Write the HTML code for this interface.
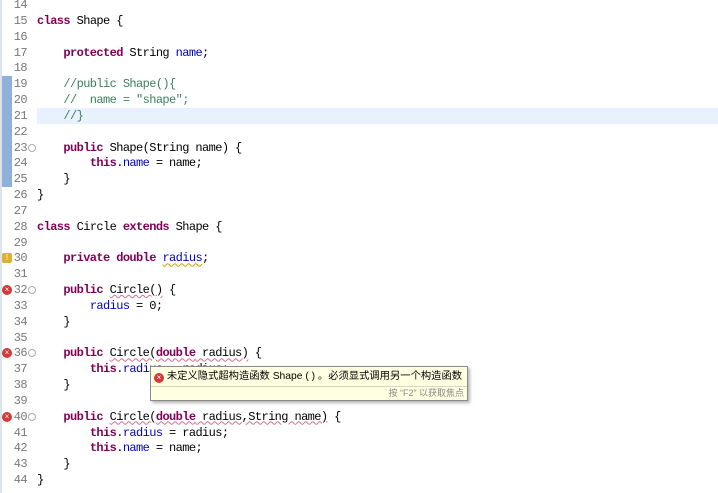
<!DOCTYPE html>
<html><head><meta charset="utf-8"><style>
body{margin:0;width:718px;height:493px;overflow:hidden;background:#fff;position:relative;font-family:"Liberation Mono",monospace;font-size:12px;letter-spacing:-0.6px}
.l{position:absolute;left:0;height:16px;line-height:16px;white-space:pre;width:718px}
.n{position:absolute;right:691px;color:#787878;text-align:right}
.c{position:absolute;left:37px;color:#000}
.k{color:#7f0055;font-weight:bold}
.f{color:#0000c0}
.cm{color:#3f7f5f}
.s{color:#2a00ff}
.sq{text-decoration:underline wavy #d07090;text-decoration-thickness:1px}
.err{position:absolute;left:2px;width:10px;height:10px;border-radius:50%;background:#d23a3a;top:3px;color:#fff;font-size:8px;line-height:10px;text-align:center;font-family:"Liberation Sans",sans-serif;letter-spacing:0}
.fold{position:absolute;left:28px;top:4px;width:6px;height:6px;border:1px solid #aaa;border-radius:50%;}
</style></head><body>
<div style="position:absolute;left:0;top:0;width:2px;height:493px;background:#dde3ea"></div>
<div style="position:absolute;left:2px;top:76px;width:10px;height:111px;background:#8fb0d8"></div>
<div style="position:absolute;left:37px;top:108px;width:681px;height:16px;background:#e8f2fe"></div>

<div class="l" style="top:-3px"><span class="n">14</span></div>
<div class="l" style="top:12.8px"><span class="n">15</span><span class="c"><span class="k">class</span> Shape {</span></div>
<div class="l" style="top:28.7px"><span class="n">16</span></div>
<div class="l" style="top:44.5px"><span class="n">17</span><span class="c">    <span class="k">protected</span> String <span class="f">name</span>;</span></div>
<div class="l" style="top:60.3px"><span class="n">18</span></div>
<div class="l" style="top:76.2px"><span class="n">19</span><span class="c"><span class="cm">    //public Shape(){</span></span></div>
<div class="l" style="top:92px"><span class="n">20</span><span class="c"><span class="cm">    //  name = "shape";</span></span></div>
<div class="l" style="top:107.8px"><span class="n">21</span><span class="c"><span class="cm">    //}</span></span></div>
<div class="l" style="top:123.6px"><span class="n">22</span></div>
<div class="l" style="top:139.5px"><span class="n">23</span><span class="fold"></span><span class="c">    <span class="k">public</span> Shape(String name) {</span></div>
<div class="l" style="top:155.3px"><span class="n">24</span><span class="c">        <span class="k">this</span>.<span class="f">name</span> = name;</span></div>
<div class="l" style="top:171.1px"><span class="n">25</span><span class="c">    }</span></div>
<div class="l" style="top:187px"><span class="n">26</span><span class="c">}</span></div>
<div class="l" style="top:202.8px"><span class="n">27</span></div>
<div class="l" style="top:218.6px"><span class="n">28</span><span class="c"><span class="k">class</span> Circle <span class="k">extends</span> Shape {</span></div>
<div class="l" style="top:234.5px"><span class="n">29</span></div>
<div class="l" style="top:250.3px"><span class="n">30</span><span class="err" style="background:#e0b030;border-radius:2px">!</span><span class="c">    <span class="k">private double</span> <span class="f sq" style="text-decoration-color:#d0a000">radius</span>;</span></div>
<div class="l" style="top:266.1px"><span class="n">31</span></div>
<div class="l" style="top:282px"><span class="n">32</span><span class="err">×</span><span class="fold"></span><span class="c">    <span class="k">public</span> <span class="sq">Circle()</span> {</span></div>
<div class="l" style="top:297.8px"><span class="n">33</span><span class="c">        <span class="f">radius</span> = 0;</span></div>
<div class="l" style="top:313.6px"><span class="n">34</span><span class="c">    }</span></div>
<div class="l" style="top:329.5px"><span class="n">35</span></div>
<div class="l" style="top:345.3px"><span class="n">36</span><span class="err">×</span><span class="fold"></span><span class="c">    <span class="k">public</span> <span class="sq">Circle(<span class="k">double</span> radius)</span> {</span></div>
<div class="l" style="top:361.1px"><span class="n">37</span><span class="c">        <span class="k">this</span>.<span class="f">radius</span> = radius;</span></div>
<div class="l" style="top:377px"><span class="n">38</span><span class="c">    }</span></div>
<div class="l" style="top:392.8px"><span class="n">39</span></div>
<div class="l" style="top:408.6px"><span class="n">40</span><span class="err">×</span><span class="fold"></span><span class="c">    <span class="k">public</span> <span class="sq">Circle(<span class="k">double</span> radius,String name)</span> {</span></div>
<div class="l" style="top:424.5px"><span class="n">41</span><span class="c">        <span class="k">this</span>.<span class="f">radius</span> = radius;</span></div>
<div class="l" style="top:440.3px"><span class="n">42</span><span class="c">        <span class="k">this</span>.<span class="f">name</span> = name;</span></div>
<div class="l" style="top:456.1px"><span class="n">43</span><span class="c">    }</span></div>
<div class="l" style="top:472px"><span class="n">44</span><span class="c">}</span></div>

<div style="position:absolute;left:150px;top:366px;width:316px;height:33px;background:#ffffe1;border:1px solid #8a8a8a;box-shadow:2px 2px 3px rgba(0,0,0,.3);font-family:'Liberation Sans','Noto Sans CJK SC',sans-serif;letter-spacing:0">
<div style="height:19px;line-height:19px;font-size:10.3px;white-space:nowrap;padding-left:3px;overflow:hidden"><span style="display:inline-block;width:10px;height:10px;border-radius:50%;background:#d23a3a;color:#fff;font-size:8px;line-height:10px;text-align:center;vertical-align:-1px">×</span> 未定义隐式超构造函数 Shape ( ) 。必须显式调用另一个构造函数</div>
<div style="border-top:1px solid #d8d8c0;height:13px;line-height:13px;font-size:9px;color:#888;text-align:right;padding-right:3px">按 “F2” 以获取焦点</div>
</div>
</body></html>
